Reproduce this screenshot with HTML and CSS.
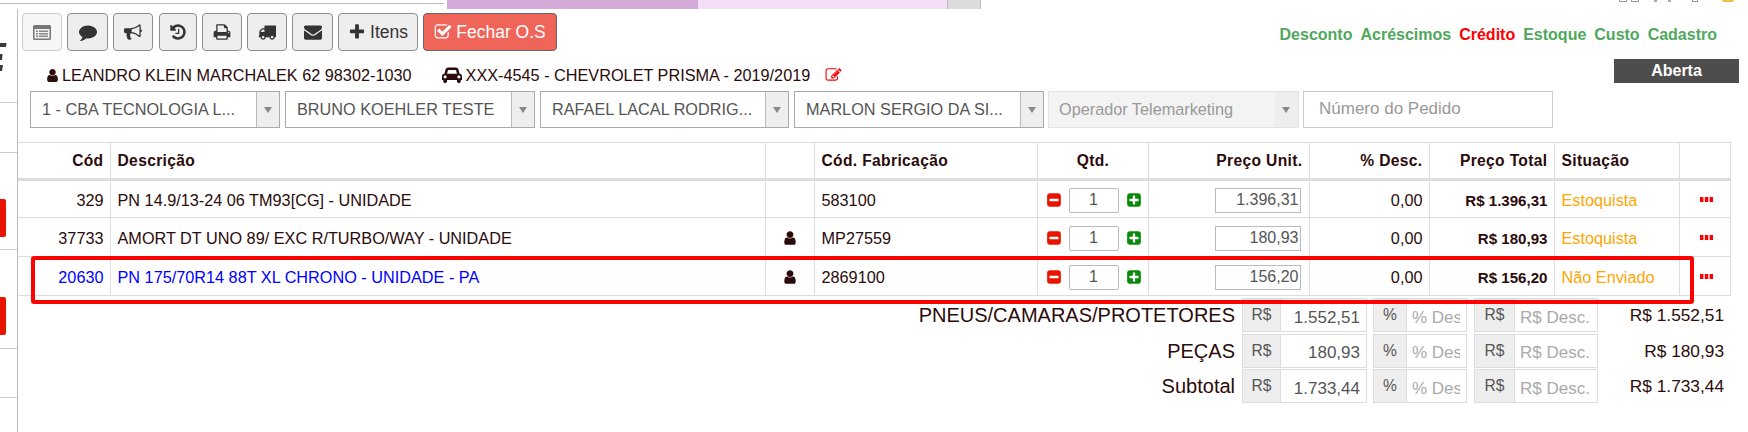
FILE: index.html
```html
<!DOCTYPE html>
<html lang="pt-BR">
  <head>
    <meta charset="UTF-8" />
    <title>Ordem de Servico</title>
    <link rel="stylesheet" href="styles.css">
  </head>
  <body>
    <svg class="sprite" xmlns="http://www.w3.org/2000/svg">
      <symbol id="i-user" viewBox="0 0 1792 1792"><path d="M1536 1399q0 109-62.5 187t-150.5 78h-854q-88 0-150.5-78t-62.5-187q0-85 8.5-160.5t31.5-152 58.5-131 94-89 134.5-34.5q131 128 313 128t313-128q76 0 134.5 34.5t94 89 58.5 131 31.5 152 8.5 160.5zm-256-887q0 159-112.5 271.5t-271.5 112.5-271.5-112.5-112.5-271.5 112.5-271.5 271.5-112.5 271.5 112.5 112.5 271.5z"/></symbol>
      <symbol id="i-comment" viewBox="0 0 1792 1792"><path d="M1792 896q0 174-120 321.5t-326 233-450 85.5q-70 0-145-8-198 175-460 242-49 14-114 22-17 2-30.5-9t-17.5-29v-1q-3-4-.5-12t2-10 4.5-9.5l6-9 7-8.5 8-9q7-8 31-34.5t34.5-38 31-39.5 32.5-51 27-59 26-76q-157-89-247.5-220t-90.5-281q0-130 71-248.5t191-204.5 286-136.5 348-50.5q244 0 450 85.5t326 233 120 321.5z"/></symbol>
      <symbol id="i-bullhorn" viewBox="0 0 1792 1792"><path d="M1664 640q53 0 90.5 37.5t37.5 90.5-37.5 90.5-90.5 37.5v384q0 52-38 90t-90 38q-417-347-812-380-58 19-91 66t-31 100.5 40 92.5q-20 33-23 65.5t6 58 33.5 55 48 50 61.5 50.5q-29 58-111.5 83t-168.5 11.5-132-55.5q-7-23-29.5-87.5t-32-94.5-23-89-15-101 3.5-98.5 22-110.5h-122q-66 0-113-47t-47-113v-192q0-66 47-113t113-47h480q435 0 896-384 52 0 90 38t38 90v384zm-128 604v-954q-394 302-768 343v270q377 42 768 341z"/></symbol>
      <symbol id="i-history" viewBox="0 0 1792 1792"><path d="M1664 896q0 156-61 298t-164 245-245 164-298 61q-172 0-327-72.5t-264-204.5q-7-10-6.5-22.5t8.5-20.5l137-138q10-9 25-9 16 2 23 12 73 95 179 147t225 52q104 0 198.5-40.5t163.5-109.5 109.5-163.5 40.5-198.5-40.5-198.5-109.5-163.5-163.5-109.5-198.5-40.5q-98 0-188 35.5t-160 101.5l137 138q31 30 14 69-17 40-59 40h-448q-26 0-45-19t-19-45v-448q0-42 40-59 39-17 69 14l130 129q107-101 244.5-156.5t284.5-55.5q156 0 298 61t245 164 164 245 61 298zm-640-288v448q0 14-9 23t-23 9h-320q-14 0-23-9t-9-23v-64q0-14 9-23t23-9h224v-352q0-14 9-23t23-9h64q14 0 23 9t9 23z"/></symbol>
      <symbol id="i-print" viewBox="0 0 1792 1792"><path d="M448 1536h896v-256h-896v256zm0-640h896v-384h-160q-40 0-68-28t-28-68v-160h-640v640zm1152 64q0-26-19-45t-45-19-45 19-19 45 19 45 45 19 45-19 19-45zm128 0v416q0 13-9.5 22.5t-22.5 9.5h-224v160q0 40-28 68t-68 28h-960q-40 0-68-28t-28-68v-160h-224q-13 0-22.5-9.5t-9.5-22.5v-416q0-79 56.5-135.5t135.5-56.5h64v-544q0-40 28-68t68-28h672q40 0 88 20t76 48l152 152q28 28 48 76t20 88v256h64q79 0 135.5 56.5t56.5 135.5z"/></symbol>
      <symbol id="i-truck" viewBox="0 0 1792 1792"><path d="M640 1408q0-52-38-90t-90-38-90 38-38 90 38 90 90 38 90-38 38-90zm-384-512h384v-256h-158q-13 0-22 9l-195 195q-9 9-9 22v30zm1280 512q0-52-38-90t-90-38-90 38-38 90 38 90 90 38 90-38 38-90zm256-1088v1024q0 15-4 26.5t-13.5 18.5-16.5 11.5-23.5 6-22.5 2-25.5 0-22.5-.5q0 106-75 181t-181 75-181-75-75-181h-384q0 106-75 181t-181 75-181-75-75-181h-64q-3 0-22.5.5t-25.5 0-22.5-2-23.5-6-16.5-11.5-13.5-18.5-4-26.5q0-26 19-45t45-19v-320q0-8-.5-35t0-38 2.5-34.5 6.5-37 14-30.5 22.5-30l198-198q19-19 50.5-32t58.5-13h160v-192q0-26 19-45t45-19h1024q26 0 45 19t19 45z"/></symbol>
      <symbol id="i-envelope" viewBox="0 0 1792 1792"><path d="M1792 710v794q0 66-47 113t-113 47h-1472q-66 0-113-47t-47-113v-794q44 49 101 87 362 246 497 345 57 42 92.5 65.5t94.5 48 110 24.5h2q51 0 110-24.5t94.5-48 92.5-65.5q170-123 498-345 57-39 100-87zm0-294q0 79-49 151t-122 123q-376 261-468 325-10 7-42.5 30.5t-54 38-52 32.5-57.5 27-50 9h-2q-23 0-50-9t-57.5-27-52-32.5-54-38-42.5-30.5q-91-64-262-182.5t-205-142.5q-62-42-117-115.5t-55-136.5q0-78 41.5-130t118.5-52h1472q65 0 112.5 47t47.5 113z"/></symbol>
      <symbol id="i-plus" viewBox="0 0 1792 1792"><path d="M1600 736v192q0 40-28 68t-68 28h-416v416q0 40-28 68t-68 28h-192q-40 0-68-28t-28-68v-416h-416q-40 0-68-28t-28-68v-192q0-40 28-68t68-28h416v-416q0-40 28-68t68-28h192q40 0 68 28t28 68v416h416q40 0 68 28t28 68z"/></symbol>
      <symbol id="i-check" viewBox="0 0 1792 1792"><path d="M1472 930v318q0 119-84.5 203.5t-203.5 84.5h-832q-119 0-203.5-84.5t-84.5-203.5v-832q0-119 84.5-203.5t203.5-84.5h832q63 0 117 25 15 7 18 23 3 17-9 29l-49 49q-10 10-23 10-3 0-9-2-23-6-45-6h-832q-66 0-113 47t-47 113v832q0 66 47 113t113 47h832q66 0 113-47t47-113v-254q0-13 9-22l64-64q10-10 23-10 6 0 12 3 20 8 20 29zm231-489l-814 814q-24 24-57 24t-57-24l-430-430q-24-24-24-57t24-57l110-110q24-24 57-24t57 24l263 263 647-647q24-24 57-24t57 24l110 110q24 24 24 57t-24 57z"/></symbol>
      <symbol id="i-car" viewBox="0 0 2048 1792"><path d="M480 1088q0-66-47-113t-113-47-113 47-47 113 47 113 113 47 113-47 47-113zm36-320h1016l-89-357q-2-8-14-17.5t-21-9.5h-768q-9 0-21 9.5t-14 17.5zm1372 320q0-66-47-113t-113-47-113 47-47 113 47 113 113 47 113-47 47-113zm160-96v384q0 14-9 23t-23 9h-96v128q0 80-56 136t-136 56-136-56-56-136v-128h-1024v128q0 80-56 136t-136 56-136-56-56-136v-128h-96q-14 0-23-9t-9-23v-384q0-93 65.5-158.5t158.5-65.5h28l105-419q23-94 104-157.5t179-63.5h768q98 0 179 63.5t104 157.5l105 419h28q93 0 158.5 65.5t65.5 158.5z"/></symbol>
      <symbol id="i-edit" viewBox="0 0 1792 1792"><path d="M888 1184l116-116-152-152-116 116v56h96v96h56zm440-720q-16-16-33 1l-350 350q-17 17-1 33t33-1l350-350q17-17 1-33zm80 594v190q0 119-84.5 203.5t-203.5 84.5h-832q-119 0-203.5-84.5t-84.5-203.5v-832q0-119 84.5-203.5t203.5-84.5h832q63 0 117 25 15 7 18 23 3 17-9 29l-49 49q-14 14-32 8-23-6-45-6h-832q-66 0-113 47t-47 113v832q0 66 47 113t113 47h832q66 0 113-47t47-113v-126q0-13 9-22l64-64q15-15 35-7t20 29zm-96-738l288 288-672 672h-288v-288zm444 132l-92 92-288-288 92-92q28-28 68-28t68 28l152 152q28 28 28 68t-28 68z"/></symbol>
      <symbol id="i-minus-square" viewBox="0 0 1792 1792"><path d="M1408 960v-128q0-26-19-45t-45-19h-896q-26 0-45 19t-19 45v128q0 26 19 45t45 19h896q26 0 45-19t19-45zm256-544v960q0 119-84.5 203.5t-203.5 84.5h-960q-119 0-203.5-84.5t-84.5-203.5v-960q0-119 84.5-203.5t203.5-84.5h960q119 0 203.5 84.5t84.5 203.5z"/></symbol>
      <symbol id="i-plus-square" viewBox="0 0 1792 1792"><path d="M1408 960v-128q0-26-19-45t-45-19h-320v-320q0-26-19-45t-45-19h-128q-26 0-45 19t-19 45v320h-320q-26 0-45 19t-19 45v128q0 26 19 45t45 19h320v320q0 26 19 45t45 19h128q26 0 45-19t19-45v-320h320q26 0 45-19t19-45zm256-544v960q0 119-84.5 203.5t-203.5 84.5h-960q-119 0-203.5-84.5t-84.5-203.5v-960q0-119 84.5-203.5t203.5-84.5h960q119 0 203.5 84.5t84.5 203.5z"/></symbol>
      <symbol id="i-dots" viewBox="0 0 13 5"><path d="M0 0h3.4v5H0zM4.8 0h3.4v5H4.8zM9.6 0H13v5H9.6z"/></symbol>
      <symbol id="i-window" viewBox="0 0 18 15"><path fill="#777" d="M1.5 0h15A1.5 1.5 0 0 1 18 1.500v12a1.500 1.500 0 0 1-1.500 1.500h-15A1.500 1.500 0 0 1 0 13.500v-12A1.500 1.500 0 0 1 1.500 0z"/><path fill="#f3f3f3" d="M1.500 4h15v9.500h-15z"/><path fill="#888" d="M3 5.500h2v1.500H3zM6 5.500h9v1.500H6zM3 8h2v1.500H3zM6 8h9v1.500H6zM3 10.500h2V12H3zM6 10.500h9V12H6z"/></symbol>
      <symbol id="i-cut" viewBox="0 0 7 28"><path d="M0 0h6.500l-.500 4H0zM0 11h2.500L2 17H0zM0 22h3l-1 6H0z"/></symbol>
    </svg>

    <div class="topbar">
      <div class="topbar-blank"></div>
      <div class="tab tab-lilac"></div>
      <div class="tab tab-pink"></div>
      <div class="tab tab-gray"></div>
      <div class="tray">
        <span class="tray-box"></span>
        <span class="tray-box"></span>
        <span class="tray-dot tray-dot-a"></span>
        <span class="tray-dot tray-dot-b"></span>
        <span class="tray-box tray-box-sm"></span>
        <span class="tray-sun"></span>
      </div>
    </div>

    <div class="page">
      <div class="sidebar">
        <div class="side-item side-first"><svg class="side-logo"><use href="#i-cut"/></svg></div>
        <div class="side-item side-s"></div>
        <div class="side-item side-m"><span class="side-red"></span></div>
        <div class="side-item side-l"><span class="side-red"></span></div>
        <div class="side-item side-s2"></div>
      </div>

      <div class="main">
        <div class="head">
          <div class="head-left">
            <div class="toolbar">
              <button type="button" class="btn btn-light w40"><svg class="ico ico-window"><use href="#i-window"/></svg></button>
              <button type="button" class="btn w41"><svg class="ico"><use href="#i-comment"/></svg></button>
              <button type="button" class="btn w40"><svg class="ico"><use href="#i-bullhorn"/></svg></button>
              <button type="button" class="btn w38 ml1"><svg class="ico"><use href="#i-history"/></svg></button>
              <button type="button" class="btn w40"><svg class="ico"><use href="#i-print"/></svg></button>
              <button type="button" class="btn w40"><svg class="ico"><use href="#i-truck"/></svg></button>
              <button type="button" class="btn w41"><svg class="ico"><use href="#i-envelope"/></svg></button>
              <button type="button" class="btn w80"><svg class="ico"><use href="#i-plus"/></svg>Itens</button>
              <button type="button" class="btn btn-red w134"><svg class="ico"><use href="#i-check"/></svg>Fechar O.S</button>
            </div>
            <div class="info">
              <svg class="ico-info"><use href="#i-user"/></svg>
              <span>LEANDRO KLEIN MARCHALEK 62 98302-1030</span>
              <svg class="ico-car"><use href="#i-car"/></svg>
              <span>XXX-4545 - CHEVROLET PRISMA - 2019/2019</span>
              <svg class="ico-edit"><use href="#i-edit"/></svg>
            </div>
          </div>
          <div class="head-right">
            <div class="links">
              <a>Desconto</a>
              <a>Acréscimos</a>
              <a class="link-red">Crédito</a>
              <a>Estoque</a>
              <a>Custo</a>
              <a>Cadastro</a>
            </div>
            <div class="status">Aberta</div>
          </div>
        </div>

        <div class="filters">
          <div class="combo"><span class="combo-text">1 - CBA TECNOLOGIA L...</span><span class="combo-arrow"></span></div>
          <div class="combo"><span class="combo-text">BRUNO KOEHLER TESTE</span><span class="combo-arrow"></span></div>
          <div class="combo combo-narrow"><span class="combo-text">RAFAEL LACAL RODRIG...</span><span class="combo-arrow"></span></div>
          <div class="combo"><span class="combo-text">MARLON SERGIO DA SI...</span><span class="combo-arrow"></span></div>
          <div class="combo combo-off"><span class="combo-text">Operador Telemarketing</span><span class="combo-arrow"></span></div>
          <input class="pedido" type="text" placeholder="Número do Pedido" />
        </div>

        <div class="grid-wrap">
          <table class="items">
            <colgroup>
              <col class="c-cod" /><col class="c-desc" /><col class="c-ico" /><col class="c-fab" /><col class="c-qtd" />
              <col class="c-unit" /><col class="c-pct" /><col class="c-total" /><col class="c-sit" /><col class="c-more" />
            </colgroup>
            <thead>
              <tr>
                <th class="r">Cód</th>
                <th>Descrição</th>
                <th></th>
                <th>Cód. Fabricação</th>
                <th class="c">Qtd.</th>
                <th class="r">Preço Unit.</th>
                <th class="r">% Desc.</th>
                <th class="r">Preço Total</th>
                <th>Situação</th>
                <th></th>
              </tr>
            </thead>
            <tbody>
              <tr class="row-a">
                <td class="r">329</td>
                <td>PN 14.9/13-24 06 TM93[CG] - UNIDADE</td>
                <td></td>
                <td>583100</td>
                <td><div class="qty"><svg class="q-minus"><use href="#i-minus-square"/></svg><input class="q-input" value="1" /><svg class="q-plus"><use href="#i-plus-square"/></svg></div></td>
                <td class="r"><input class="price" value="1.396,31" /></td>
                <td class="r">0,00</td>
                <td class="r total">R$ 1.396,31</td>
                <td class="sit">Estoquista</td>
                <td><svg class="dots"><use href="#i-dots"/></svg></td>
              </tr>
              <tr>
                <td class="r">37733</td>
                <td>AMORT DT UNO 89/ EXC R/TURBO/WAY - UNIDADE</td>
                <td class="c"><svg class="ico-row"><use href="#i-user"/></svg></td>
                <td>MP27559</td>
                <td><div class="qty"><svg class="q-minus"><use href="#i-minus-square"/></svg><input class="q-input" value="1" /><svg class="q-plus"><use href="#i-plus-square"/></svg></div></td>
                <td class="r"><input class="price" value="180,93" /></td>
                <td class="r">0,00</td>
                <td class="r total">R$ 180,93</td>
                <td class="sit">Estoquista</td>
                <td><svg class="dots"><use href="#i-dots"/></svg></td>
              </tr>
              <tr class="row-blue">
                <td class="r">20630</td>
                <td>PN 175/70R14 88T XL CHRONO - UNIDADE - PA</td>
                <td class="c"><svg class="ico-row"><use href="#i-user"/></svg></td>
                <td class="dark">2869100</td>
                <td><div class="qty"><svg class="q-minus"><use href="#i-minus-square"/></svg><input class="q-input" value="1" /><svg class="q-plus"><use href="#i-plus-square"/></svg></div></td>
                <td class="r"><input class="price" value="156,20" /></td>
                <td class="r dark">0,00</td>
                <td class="r total dark">R$ 156,20</td>
                <td class="sit">Não Enviado</td>
                <td><svg class="dots"><use href="#i-dots"/></svg></td>
              </tr>
            </tbody>
          </table>
          <div class="highlight"></div>
        </div>

        <div class="summary">
          <div class="s-label">PNEUS/CAMARAS/PROTETORES</div>
          <div class="group g1"><span class="addon">R$</span><input class="g-input" value="1.552,51" /></div>
          <div class="group g2"><span class="addon">%</span><input class="g-input g-left" placeholder="% Desc." /></div>
          <div class="group g3"><span class="addon">R$</span><input class="g-input g-left" placeholder="R$ Desc." /></div>
          <div class="s-total">R$ 1.552,51</div>

          <div class="s-label">PEÇAS</div>
          <div class="group g1"><span class="addon">R$</span><input class="g-input" value="180,93" /></div>
          <div class="group g2"><span class="addon">%</span><input class="g-input g-left" placeholder="% Desc." /></div>
          <div class="group g3"><span class="addon">R$</span><input class="g-input g-left" placeholder="R$ Desc." /></div>
          <div class="s-total">R$ 180,93</div>

          <div class="s-label">Subtotal</div>
          <div class="group g1"><span class="addon">R$</span><input class="g-input" value="1.733,44" /></div>
          <div class="group g2"><span class="addon">%</span><input class="g-input g-left" placeholder="% Desc." /></div>
          <div class="group g3"><span class="addon">R$</span><input class="g-input g-left" placeholder="R$ Desc." /></div>
          <div class="s-total">R$ 1.733,44</div>
        </div>
      </div>
    </div>
  </body>
</html>
```

FILE: styles.css
```css
* {
  box-sizing: border-box;
}
html,
body {
  margin: 0;
  padding: 0;
  height: 432px;
  overflow: hidden;
  background: #fff;
}
body {
  font-family: "Liberation Sans", Arial, sans-serif;
  font-size: 16.25px;
  color: #2b0b0b;
}
input {
  font-family: inherit;
  outline: none;
}
.sprite {
  width: 0;
  height: 0;
  display: block;
}

/* top strip */
.topbar {
  display: flex;
  height: 9px;
}
.topbar-blank {
  width: 444px;
  height: 4px;
  border-bottom: 1px solid #bbb;
  margin-right: 3px;
}
.tab {
  height: 9px;
}
.tab-lilac {
  width: 251px;
  background: #d3a9d8;
}
.tab-pink {
  width: 249px;
  background: #f5dff8;
}
.tab-gray {
  width: 34px;
  background: #dcdcdc;
  border: 1px solid #bbb;
  border-width: 0 1px;
}
.tray {
  display: flex;
  height: 2px;
  margin-left: 638px;
}
.tray-box {
  width: 8px;
  height: 2px;
  border: 1px solid #999;
  border-top: 0;
  margin-right: 4px;
}
.tray-box-sm {
  width: 6px;
  margin-left: 21px;
  margin-right: 24px;
}
.tray-dot {
  width: 3px;
  height: 2px;
  background: #aaa;
}
.tray-dot-a {
  margin-left: 11px;
}
.tray-dot-b {
  margin-left: 11px;
}
.tray-sun {
  width: 12px;
  height: 2px;
  background: #e8c24a;
  border-radius: 0 0 6px 6px;
}

/* layout */
.page {
  display: flex;
  height: 423px;
}
.sidebar {
  width: 18px;
  flex: none;
  border-right: 1px solid #bbb;
}
.side-item {
  border-bottom: 1px solid #ccc;
  display: flex;
  align-items: flex-end;
}
.side-first {
  height: 94px;
  padding-bottom: 31px;
}
.side-s {
  height: 50px;
}
.side-m {
  height: 97px;
  padding-bottom: 12px;
}
.side-l {
  height: 99px;
  padding-bottom: 13px;
}
.side-s2 {
  height: 49px;
}
.side-logo {
  width: 7px;
  height: 28px;
  fill: #3a3a3a;
}
.side-red {
  width: 6px;
  height: 38px;
  background: #e81400;
  border-radius: 0 2px 2px 0;
}
.main {
  flex: 1;
  min-width: 0;
}

/* header */
.head {
  display: flex;
  justify-content: space-between;
}
.toolbar {
  display: flex;
  gap: 5px;
  padding: 4px 0 0 4px;
}
.btn {
  height: 38px;
  padding: 0;
  border: 1px solid #8e8e8e;
  border-radius: 4px;
  background: #eee;
  color: #333;
  font-family: inherit;
  font-size: 17.5px;
  display: flex;
  align-items: center;
  justify-content: center;
  gap: 4px;
  white-space: nowrap;
}
.btn-light {
  background: #f6f6f6;
  border-color: #ccc;
}
.btn-red {
  background: #f0655a;
  border-color: #666;
  color: #fff;
}
.w38 {
  width: 38px;
}
.w40 {
  width: 40px;
}
.w41 {
  width: 41px;
}
.w80 {
  width: 80px;
}
.w134 {
  width: 134px;
}
.ml1 {
  margin-left: 1px;
}
.ico {
  width: 18px;
  height: 18px;
  fill: currentColor;
  flex: none;
}
.ico-window {
  height: 15px;
}
.info {
  display: flex;
  align-items: center;
  height: 18px;
  margin-top: 15px;
  padding-left: 27px;
}
.ico-info {
  width: 15px;
  height: 15px;
  fill: #2b0b0b;
  margin-right: 2px;
}
.ico-car {
  width: 20px;
  height: 18px;
  fill: #2b0b0b;
  margin: 0 4px 0 30px;
}
.ico-edit {
  width: 17px;
  height: 16px;
  fill: #f00;
  margin-left: 15px;
}
.head-right {
  display: flex;
  flex-direction: column;
  align-items: flex-end;
  padding-right: 9px;
}
.links {
  display: flex;
  gap: 8px;
  margin: 17px 22px 0 0;
  height: 18px;
  line-height: 18px;
  font-weight: 700;
  font-size: 16px;
  color: #4fa85c;
}
.link-red {
  color: #f00;
}
.status {
  width: 125px;
  height: 24px;
  margin-top: 15px;
  background: #4d4d4d;
  color: #fff;
  font-weight: 700;
  font-size: 16px;
  line-height: 24px;
  text-align: center;
}

/* filters */
.filters {
  display: flex;
  gap: 5px;
  height: 37px;
  margin-top: 7px;
  padding-left: 12px;
}
.combo {
  width: 250px;
  display: flex;
  border: 1px solid #aaa;
  color: #555;
}
.combo-narrow {
  width: 249px;
}
.combo-text {
  flex: 1;
  padding-left: 11px;
  line-height: 35px;
  white-space: nowrap;
  overflow: hidden;
}
.combo-arrow {
  width: 23px;
  background: #eee;
  border-left: 1px solid #bbb;
  position: relative;
}
.combo-arrow::after {
  content: "";
  position: absolute;
  left: 7px;
  top: 15px;
  border: 4px solid transparent;
  border-top: 6px solid #888;
  border-bottom: 0;
}
.combo-off {
  width: 251px;
  margin-left: -1px;
  border-color: #e2e2e2;
  background: #f3f3f3;
  color: #999;
}
.combo-off .combo-text {
  padding-left: 10px;
}
.combo-off .combo-arrow {
  border: 0;
}
.pedido {
  width: 250px;
  margin-left: -1px;
  border: 1px solid #ccc;
  padding: 0 0 2px 15px;
  font-size: 17px;
}
.pedido::placeholder {
  color: #999;
}

/* items table */
.grid-wrap {
  position: relative;
  margin-top: 14px;
}
.items {
  width: 1712px;
  table-layout: fixed;
  border-collapse: collapse;
}
.c-cod {
  width: 92px;
}
.c-desc {
  width: 655px;
}
.c-ico {
  width: 49px;
}
.c-fab {
  width: 223px;
}
.c-qtd {
  width: 111px;
}
.c-unit {
  width: 161px;
}
.c-pct {
  width: 120px;
}
.c-total {
  width: 125px;
}
.c-sit {
  width: 125px;
}
.c-more {
  width: 51px;
}
.items th,
.items td {
  border: 1px solid #ddd;
  padding: 0 6px 0 7px;
  text-align: left;
  white-space: nowrap;
}
.items td {
  padding-top: 2px;
}
.items th:first-child,
.items td:first-child {
  border-left: 0;
}
.items th {
  height: 37px;
  border-bottom: 3px solid #ddd;
  font-size: 15.6px;
  letter-spacing: 0.35px;
}
.items td {
  height: 39px;
}
.items .row-a td {
  height: 38px;
}
.items .r {
  text-align: right;
}
.items .c {
  text-align: center;
}
.items .total {
  font-weight: 700;
  font-size: 15.1px;
}
.items .sit {
  color: #ffa500;
}
.row-blue td {
  color: #00f;
}
.items .row-blue .dark {
  color: #2b0b0b;
}
.items .row-blue .sit {
  color: #ffa500;
}
.dots {
  width: 13px;
  height: 5px;
  fill: #f00;
  display: block;
  margin: 0 0 2px 13px;
}
.ico-row {
  width: 16px;
  height: 16px;
  fill: #2b0b0b;
  display: block;
  margin: 0 auto;
}
.qty {
  display: flex;
  align-items: center;
  justify-content: space-between;
  margin-left: 1px;
}
.q-minus {
  width: 16px;
  height: 16px;
  fill: #e81400;
}
.q-plus {
  width: 16px;
  height: 16px;
  fill: #0a8a0a;
}
.q-input {
  width: 50px;
  height: 25px;
  border: 1px solid #bbb;
  border-radius: 2px;
  padding: 0;
  text-align: center;
  font-size: 16px;
  color: #555;
}
.price {
  width: 86px;
  height: 25px;
  margin-right: 2px;
  border: 1px solid #bbb;
  padding: 0 1px 0 0;
  text-align: right;
  font-size: 16px;
  color: #555;
}
.highlight {
  position: absolute;
  left: 13px;
  top: 114px;
  width: 1663px;
  height: 48px;
  border: 4px solid #f00;
  border-radius: 3px;
  pointer-events: none;
}

/* totals */
.summary {
  display: grid;
  grid-template-columns: 1217px 125px 93px 124px 119px;
  column-gap: 7px;
  row-gap: 1.500px;
  margin-top: 2px;
  font-size: 17.3px;
}
.s-label {
  text-align: right;
  font-size: 20px;
  line-height: 34px;
}
.s-total {
  text-align: right;
  line-height: 34px;
}
.group {
  display: flex;
  height: 34px;
  border: 1px solid #ddd;
}
.g2 {
  margin-left: -1px;
}
.addon {
  flex: none;
  background: #eee;
  border-right: 1px solid #ddd;
  color: #555;
  font-size: 15.6px;
  text-align: center;
  line-height: 32px;
}
.g1 .addon {
  width: 38px;
}
.g2 .addon {
  width: 33px;
}
.g3 .addon {
  width: 40px;
}
.g-input {
  flex: 1;
  min-width: 0;
  border: 0;
  padding: 5px 6px 0 5px;
  text-align: right;
  font-size: 17px;
  color: #555;
}
.g-left {
  text-align: left;
}
.g-input::placeholder {
  color: #aaa;
}
```
